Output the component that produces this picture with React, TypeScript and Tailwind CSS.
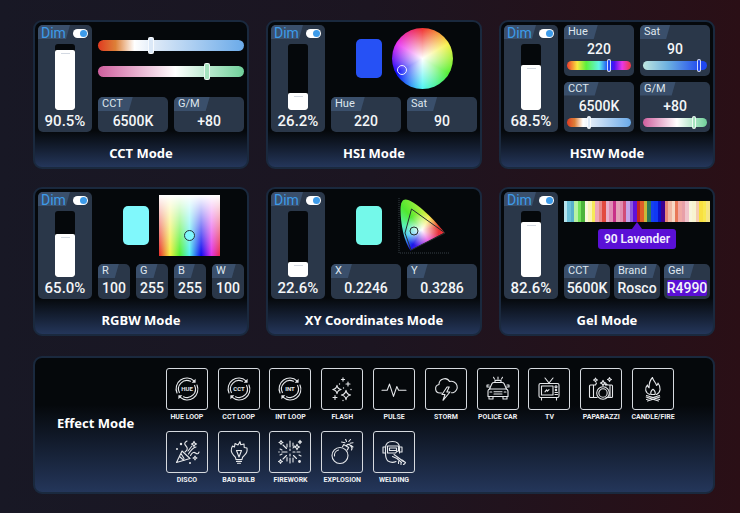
import React, { useId, useState } from "react";

const SANS = "font-['Roboto','Liberation_Sans',sans-serif]";

const CCT_TRACK =
  "[&::-webkit-slider-runnable-track]:bg-[linear-gradient(90deg,#e03a20_0%,#dd8038_12%,#ffffff_25%,#dbe8f7_40%,#6aaae9_100%)]";
const GM_TRACK =
  "[&::-webkit-slider-runnable-track]:bg-[linear-gradient(90deg,#cf5f9e_0%,#ffffff_53%,#6fd09a_100%)]";
const HUE_TRACK =
  "[&::-webkit-slider-runnable-track]:bg-[linear-gradient(90deg,#f03a2c_0%,#f8e840_16%,#5cf03c_30%,#60f4e8_50%,#1030f8_66%,#5010f0_74%,#e838e8_86%,#f03a3c_100%)]";
const SAT_TRACK =
  "[&::-webkit-slider-runnable-track]:bg-[linear-gradient(90deg,#bfe6e0_0%,#6aaee0_40%,#2048f0_90%,#2048f0_100%)]";

type SliderProps = { label: string; initial: number; track: string; small?: boolean; tint?: string };

function Slider({ label, initial, track, small, tint = "[&::-webkit-slider-thumb]:bg-[#dce9f8]" }: SliderProps) {
  const [value, setValue] = useState(initial);
  const size = small
    ? "h-[13px] [&::-webkit-slider-runnable-track]:h-[9px] [&::-webkit-slider-thumb]:-mt-0.5 [&::-webkit-slider-thumb]:h-[13px] [&::-webkit-slider-thumb]:w-1 [&::-webkit-slider-thumb]:border"
    : "h-[17px] [&::-webkit-slider-runnable-track]:h-[11px] [&::-webkit-slider-thumb]:-mt-[3px] [&::-webkit-slider-thumb]:h-[17px] [&::-webkit-slider-thumb]:w-[6px] [&::-webkit-slider-thumb]:border";
  return (
    <input
      type="range"
      aria-label={label}
      min={0}
      max={100}
      value={value}
      onChange={(e) => setValue(Number(e.target.value))}
      className={`block w-full appearance-none bg-transparent [&::-webkit-slider-runnable-track]:rounded-full [&::-webkit-slider-thumb]:appearance-none [&::-webkit-slider-thumb]:rounded-[2px] [&::-webkit-slider-thumb]:border-white/80 ${size} ${tint} ${track}`}
    />
  );
}

function Tab({ children }: { children: React.ReactNode }) {
  return (
    <span className="block h-3.5 self-start rounded-tl-[5px] bg-[#3a4f6b] pr-2.5 pl-1 text-[11px] leading-[14px] text-[#dfe6ee] [clip-path:polygon(0_0,100%_0,calc(100%-4px)_100%,0_100%)]">
      {children}
    </span>
  );
}

type TileProps = { label: string; value: string; highlight?: boolean; children?: React.ReactNode };

function Tile({ label, value, highlight, children }: TileProps) {
  return (
    <div className="flex min-w-0 flex-col rounded-[5px] bg-[#2a3749] pb-px">
      <Tab>{label}</Tab>
      <span className="flex h-5 items-center justify-center text-sm leading-4 font-medium text-[#f4f6f8]">
        <span className={highlight ? "rounded-[2px] bg-[#5a10d6]" : ""}>{value}</span>
      </span>
      {children && <div className="px-[3px]">{children}</div>}
    </div>
  );
}

function DimPanel({ level }: { level: number }) {
  const [value, setValue] = useState(level);
  const id = useId();
  return (
    <div className="flex w-[54px] shrink-0 flex-col rounded-[5px] bg-[#2a3749]">
      <div className="flex items-center justify-between pr-1">
        <label
          htmlFor={id}
          className="h-3.5 w-8 rounded-tl-[5px] bg-[#3a4f6b] pl-[3px] text-sm leading-[17px] text-[#3d9be9] [clip-path:polygon(0_0,100%_0,calc(100%-4px)_100%,0_100%)]"
        >
          Dim
        </label>
        <input
          id={id}
          type="checkbox"
          role="switch"
          defaultChecked
          className="mt-0.5 flex h-[9px] w-[15px] appearance-none items-center rounded-full bg-white px-px before:size-[7px] before:rounded-full before:bg-slate-400 before:content-[''] checked:justify-end checked:before:bg-[#3d9be9]"
        />
      </div>
      <div className="relative mx-auto mt-[5px] flex h-[66px] w-5 flex-col justify-end overflow-hidden rounded-[3px] bg-[#05080b]">
        <div className="flex justify-center rounded-[2px] bg-white pt-[3px]" style={{ height: `${value}%` }}>
          <span className="h-px w-[9px] bg-[#d3d9e2]" />
        </div>
        <input
          type="range"
          aria-label="Dim level"
          min={0}
          max={100}
          step={0.1}
          value={value}
          onChange={(e) => setValue(Number(e.target.value))}
          className="absolute inset-0 h-full w-full opacity-0 [direction:rtl] [writing-mode:vertical-lr]"
        />
      </div>
      <output className="block text-center text-[15px] leading-[22px] font-medium text-[#f4f6f8]">
        {value.toFixed(1)}%
      </output>
    </div>
  );
}

function ModeCard({ title, level, children }: { title: string; level: number; children: React.ReactNode }) {
  return (
    <section className="rounded-[9px] border-2 border-[#1a293e] bg-[linear-gradient(180deg,#05080b_0%,#05080b_75%,#24365a_100%)] px-[3px] pt-[3px]">
      <div className="flex gap-1.5">
        <DimPanel level={level} />
        <div className="flex min-w-0 flex-1 flex-col gap-1.5">{children}</div>
      </div>
      <h2 className="pt-[11px] pb-1 text-center font-['Noto_Sans','Liberation_Sans',sans-serif] text-[13px] leading-5 font-bold text-white">
        {title}
      </h2>
    </section>
  );
}

function Picker({ swatch, children }: { swatch: string; children: React.ReactNode }) {
  return (
    <div className="flex flex-1 items-center justify-center gap-2.5">
      <div className={`h-[39px] w-[26px] rounded-[5px] ${swatch}`} />
      <div className="relative size-[61px]">{children}</div>
    </div>
  );
}

const GEL_COLOURS = [
  "#b5e3ee", "#6cc0d8", "#58b0cc", "#b6f2a4", "#74e45c", "#4cb43a", "#f9f7dc", "#f8f4b4", "#f6ea58",
  "#eea6b8", "#e88888", "#e24a40", "#e8b0cc", "#e08cb4", "#c83088", "#e4a0b8", "#e08cb0", "#d04c78",
  "#c4a4ea", "#8c58dc", "#6010d8", "#c42420", "#e05c28", "#c8b838", "#2c7858", "#1440f0", "#1038f4",
  "#0a10c8", "#3c0090", "#e88878", "#f0b8a4", "#f6d8c4", "#e87858", "#f0a8a4", "#e8a0a8",
  "#f0c4cc", "#f8f6dc", "#f8f4d0", "#f4ccb0", "#f8e040", "#f8e850", "#f4e484",
];

const Star = ({ x, y, r }: { x: number; y: number; r: number }) => (
  <path d={`M${x} ${y - r}Q${x + r * 0.15} ${y - r * 0.15} ${x + r} ${y}Q${x + r * 0.15} ${y + r * 0.15} ${x} ${y + r}Q${x - r * 0.15} ${y + r * 0.15} ${x - r} ${y}Q${x - r * 0.15} ${y - r * 0.15} ${x} ${y - r}Z`} />
);

const Plus = ({ x, y, r = 1.6 }: { x: number; y: number; r?: number }) => (
  <path d={`M${x - r} ${y}h${r * 2}M${x} ${y - r}v${r * 2}`} />
);

const Dot = ({ x, y, r = 0.7 }: { x: number; y: number; r?: number }) => (
  <circle cx={x} cy={y} r={r} fill="currentColor" stroke="none" />
);

function Loop({ word }: { word: string }) {
  return (
    <>
      <path d="M-10 4A10.7 10.7 0 0 1 7 -8.2M-7.6 3.6A8.4 8.4 0 0 1 3.5 -7.7" />
      <path d="M10 -4A10.7 10.7 0 0 1 -7 8.2M7.6 -3.6A8.4 8.4 0 0 1 -3.5 7.7" />
      <path d="M8.6 -10.2v4h-4zM-8.6 10.2v-4h4z" fill="currentColor" stroke="none" />
      <text x="0" y="2.2" textAnchor="middle" fontSize="6" fontWeight="700" fill="currentColor" stroke="none">
        {word}
      </text>
    </>
  );
}

const EFFECTS: { name: string; art: React.ReactNode }[] = [
  { name: "HUE LOOP", art: <Loop word="HUE" /> },
  { name: "CCT LOOP", art: <Loop word="CCT" /> },
  { name: "INT LOOP", art: <Loop word="INT" /> },
  {
    name: "FLASH",
    art: (
      <>
        <Star x={-5} y={0.5} r={4.2} />
        <Star x={4} y={6} r={4.6} />
        <Plus x={1} y={-9.5} />
        <Plus x={6} y={-5} r={2} />
        <Plus x={-7} y={8.5} r={2} />
        <Dot x={9} y={0.5} />
        <Dot x={1} y={11.5} />
        <Dot x={-2.5} y={-5} />
        <Dot x={1.5} y={-1} />
      </>
    ),
  },
  { name: "PULSE", art: <path d="M-12 1.3h5.2l2.3-6.2L-.5 7.4 2.8-2.4 4.6 1.3H12" /> },
  {
    name: "STORM",
    art: (
      <>
        <path d="M-4.500 4h-1.700a4.300 4.300 0 0 1-.8-8.500A5.700 5.700 0 0 1 3.600-7.500a5.400 5.400 0 0 1 3.500 11.200H5.500" />
        <path d="M1-2-4 5.500h3l-2 5.800L4 3H.8L3.200-2z" />
      </>
    ),
  },
  {
    name: "POLICE CAR",
    art: (
      <>
        <path d="M-8.5 0-6-5.5Q-5.5-6.5-4-6.5h8q1.5 0 2 1L8.5 0M-7.5 0h15q2.5 0 2.5 2.5v5H-10v-5Q-10 0-7.5 0ZM-9 7.5V10h4V7.5M9 7.5V10H5V7.5" />
        <path d="M-3-6.5V-8.6h6v2.1M0-10v-2M-3.5-10l-1-1.7M3.5-10l1-1.7M-8.5-2H-11v-2h2M8.5-2H11v-2H9M-4 2.7h8M-4 5h8M-8 3h1.8M8 3H6.2" />
      </>
    ),
  },
  {
    name: "TV",
    art: (
      <>
        <rect x="-10" y="-5.5" width="20" height="14" rx="1.5" />
        <rect x="-7.5" y="-3" width="11.5" height="9" />
        <path d="M-4-11 0-6l4-5M-7.5 8.5V11M7.5 8.5V11M-4 2.8l1.6-2 .8 1.4L0 .6M6 3.5h2.5M6 5.5h2.5" />
        <circle cx="7" cy="-2.2" r="1" />
        <circle cx="7" cy="1" r=".7" />
      </>
    ),
  },
  {
    name: "PAPARAZZI",
    art: (
      <>
        <path d="M-4 8.5h-6.5Q-11.5 8.5-11.5 7.5V-3Q-11.5-4-10.5-4h5l1-2M5 8.5h5.5q1 0 1-1V-3q0-1-1-1H6.5M-7.5-4V8.5M9-4V8.5" />
        <circle cx="2" cy="4" r="6.3" />
        <circle cx="2" cy="4" r="4.2" />
        <Star x={-5.5} y={-9} r={2} />
        <Star x={8.5} y={-9.5} r={2} />
        <Star x={2} y={-6} r={2.6} />
        <Plus x={5} y={-4.5} r={1.2} />
      </>
    ),
  },
  {
    name: "CANDLE/FIRE",
    art: (
      <>
        <path d="M-3 5.5C-8 4-8.5-1-5.5-4q.3 2 1.600 2.800C-4-6-3-9-.5-11.500.2-8 3-6.500 3.500-3.500 4.800-4.200 5-5 5-6 8-2 8 3.500 3.500 5.500" />
        <path d="M-2 5.5Q-3 2.500 0 .3 3 2.500 2 5.500Z" />
        <path d="M-6.500 6.500 6.500 10.500M6.500 6.500-6.500 10.500M-6.800 8 0 10.300M6.800 8 0 10.300M-5.500 12 0 10.300 5.500 12" />
      </>
    ),
  },
  {
    name: "DISCO",
    art: (
      <>
        <path d="M-10.5 10.5-5 -1 3 6.5ZM-7.5 4.5l4.5 4M-6 1.5l3 5" />
        <path d="M-2 0Q2-3-1-6T0-11M1.5 2Q5-4 9-5M3.5 3.5Q6-1 8.5 1T12 0M1 -1 5-6" />
        <Star x={7} y={-8} r={2.6} />
        <Star x={8} y={6} r={2} />
        <Dot x={-10} y={-3} r={1} />
        <Dot x={-6} y={-8} r={1.2} />
        <Dot x={3} y={11} r={1} />
      </>
    ),
  },
  {
    name: "BAD BULB",
    art: (
      <>
        <path d="M-3 7.5Q-3 5-5.5 3.2A7.8 7.8 0 0 1-6.5-6l2 1 .5-3.5 3 1.5L1-10.4 1.8-7.2 5-8l.2 3.5L8-4A7.8 7.8 0 0 1 5.5 3.2Q3 5 3 7.5Z" />
        <path d="M-2.5-1.5 0 5 2.5-1.5H-2.5M-2.5 9.4h5M-1.5 11.3h3" />
      </>
    ),
  },
  {
    name: "FIREWORK",
    art: (
      <>
        <path d="M0-11v6M0-3v1.5M0 2v2M0 6v5M-3.5-3.5-7-7M-3 0h-5M-3.5 3.5-7 7M3.5 3.5 6.5 6.5M3 0h2M7 0h3M3-4l1.5-2M-3-8v3M3-9v3M-3 5.5V9M3 6v4M-10-3l2 1M-10 3l2-1M9 3l2 1" />
        <Star x={7} y={-5} r={2.6} />
        <Star x={-9} y={-9.5} r={2} />
        <Star x={10} y={-10} r={1.6} />
        <Star x={-9.5} y={9.5} r={2} />
        <Dot x={9.5} y={9.5} r={1.4} />
        <Dot x={-11} y={0} />
      </>
    ),
  },
  {
    name: "EXPLOSION",
    art: (
      <>
        <circle cx="-2" cy="3.5" r="8" />
        <path d="m.5-5.2 1.2-2.3 5 3-1.4 2.4M4.2-6Q6-9 8.5-6.5T9.5-2M-7.5 4A5.4 5.4 0 0 1-3.5-2" />
        <path d="M3-9.2-.5-10M4.5-10.5 3.5-13M6.800-10.500 8.500-12.500M8-8.800l3-.5M9-6.500l2 1.500" />
      </>
    ),
  },
  {
    name: "WELDING",
    art: (
      <>
        <path d="M2 9.500Q-2 11.500-6 9-8.500 7-8.500 1V-4Q-8.500-10.500-1.500-10.500T5.500-4V1" />
        <path d="M-8.500-5H-11v6h2.500M5.500-5H8v5H5.500" />
        <path d="M-6.500-6H4.500V-1Q2.500-1 1.500 1h-8ZM-4.500-4H2.500V-1.500H-4.500ZM0 2.500 9.500 9.500M-1.500 4.500 3 6.500l4.500 4" />
        <path d="m8 8 3.500 2.500-1 1.500M9.500 12.500l1.500-1M4.500 9.500v2M7 11v1.500" />
      </>
    ),
  },
];

export default function App() {
  return (
    <main
      className={`min-h-screen bg-[linear-gradient(90deg,#181825_0%,#1c1521_50%,#2a0f16_100%)] pt-5 pr-[25px] pb-[19px] pl-[33px] ${SANS}`}
    >
      <div className="grid grid-cols-3 gap-x-[17px] gap-y-[18px]">
        <ModeCard title="CCT Mode" level={90.5}>
          <div className="flex flex-1 flex-col justify-center gap-[9px]">
            <Slider label="Colour temperature" initial={36} track={CCT_TRACK} />
            <Slider label="Green / magenta" initial={76} track={GM_TRACK} tint="[&::-webkit-slider-thumb]:bg-[#a5e3bf]" />
          </div>
          <div className="grid grid-cols-2 gap-1.5">
            <Tile label="CCT" value="6500K" />
            <Tile label="G/M" value="+80" />
          </div>
        </ModeCard>

        <ModeCard title="HSI Mode" level={26.2}>
          <Picker swatch="bg-[#2651f5]">
            <div className="size-full rounded-full bg-[radial-gradient(circle,#ffffff_0%,transparent_70%),conic-gradient(#f03030,#f8f048,#50f030,#50f4f4,#0808f8,#e830f0,#f03030)]" />
            <span className="absolute top-[37px] left-[5px] size-2.5 rounded-full border border-white/90" />
          </Picker>
          <div className="grid grid-cols-2 gap-1.5">
            <Tile label="Hue" value="220" />
            <Tile label="Sat" value="90" />
          </div>
        </ModeCard>

        <ModeCard title="HSIW Mode" level={68.5}>
          <div className="grid flex-1 grid-cols-2 grid-rows-2 gap-1.5">
            <Tile label="Hue" value="220">
              <Slider small label="Hue" initial={66} track={HUE_TRACK} tint="[&::-webkit-slider-thumb]:bg-[#2048f0]" />
            </Tile>
            <Tile label="Sat" value="90">
              <Slider small label="Saturation" initial={90} track={SAT_TRACK} tint="[&::-webkit-slider-thumb]:bg-[#2048f0]" />
            </Tile>
            <Tile label="CCT" value="6500K">
              <Slider small label="Colour temperature" initial={33} track={CCT_TRACK} />
            </Tile>
            <Tile label="G/M" value="+80">
              <Slider small label="Green / magenta" initial={82} track={GM_TRACK} tint="[&::-webkit-slider-thumb]:bg-[#a5e3bf]" />
            </Tile>
          </div>
        </ModeCard>

        <ModeCard title="RGBW Mode" level={65}>
          <Picker swatch="bg-[#80f8fc]">
            <div className="size-full bg-[linear-gradient(180deg,#ffffff_0%,transparent_100%),linear-gradient(90deg,#e82828_0%,#f4f040_18%,#50f030_34%,#50f0f0_50%,#0808f0_69%,#e030e8_86%,#e82848_100%)]" />
            <span className="absolute top-[35px] left-[25px] size-[11px] rounded-full border border-[#26343c] bg-[#80f8fc]" />
          </Picker>
          <div className="grid grid-cols-4 gap-1.5">
            <Tile label="R" value="100" />
            <Tile label="G" value="255" />
            <Tile label="B" value="255" />
            <Tile label="W" value="100" />
          </div>
        </ModeCard>

        <ModeCard title="XY Coordinates Mode" level={22.6}>
          <Picker swatch="bg-[#74f9ea]">
            <div className="size-full bg-[radial-gradient(circle_at_30px_35px,#ffffff_0px,transparent_17px),conic-gradient(at_30px_35px,#b8f040_0deg,#f4e838_30deg,#e83028_80deg,#e83040_105deg,#e828d8_150deg,#1818e8_212deg,#48c8f0_250deg,#58f0b0_285deg,#50e830_320deg,#b8f040_360deg)] [clip-path:path('M9_15C9_8_11_5_14_5C22_5_40_22_53_38L19_56C13_48_9_30_9_15Z')]" />
            <svg viewBox="0 0 61 61" className="absolute inset-0 size-full" fill="none" aria-hidden="true">
              <path d="M7 3v55h50" stroke="#363e46" strokeDasharray="1 1" />
              <path d="M19.500 14 53 38 19 55 13 38Z" stroke="#26302e" />
              <circle cx="22" cy="36" r="4" stroke="#26302e" />
            </svg>
          </Picker>
          <div className="grid grid-cols-2 gap-1.5">
            <Tile label="X" value="0.2246" />
            <Tile label="Y" value="0.3286" />
          </div>
        </ModeCard>

        <ModeCard title="Gel Mode" level={82.6}>
          <div className="flex flex-1 flex-col items-center pt-[9px]">
            <div className="flex h-[21px] w-full">
              {GEL_COLOURS.map((colour, i) => (
                <span key={i} className="flex-1" style={{ backgroundColor: colour }} />
              ))}
            </div>
            <span className="h-[7px] w-2.5 bg-[#5a10d6] [clip-path:polygon(50%_0,100%_100%,0_100%)]" />
            <span className="rounded-[3px] bg-[#5a10d6] px-1.5 text-xs leading-5 font-semibold text-[#f4f0ff]">
              90 Lavender
            </span>
          </div>
          <div className="grid grid-cols-3 gap-1">
            <Tile label="CCT" value="5600K" />
            <Tile label="Brand" value="Rosco" />
            <Tile label="Gel" value="R4990" highlight />
          </div>
        </ModeCard>
      </div>

      <section className="mt-5 flex items-start rounded-[9px] border-2 border-[#1a293e] bg-[linear-gradient(180deg,#05080b_0%,#05080b_35%,#24365a_100%)] pt-2.5 pr-[34px] pb-[7px] pl-[22px]">
        <h2 className="w-[104px] shrink-0 pt-[45px] font-['Noto_Sans','Liberation_Sans',sans-serif] text-[13px] leading-5 font-bold text-white">
          Effect Mode
        </h2>
        <ul className="grid flex-1 grid-cols-10 gap-y-[9px]">
          {EFFECTS.map(({ name, art }) => (
            <li key={name} className="flex justify-center">
              <button type="button" className="flex flex-col items-center gap-0.5">
                <span className="flex size-[42px] items-center justify-center rounded-[3px] border border-[#d6dadf]">
                  <svg
                    viewBox="-13 -13 26 26"
                    className="size-[26px] text-[#e6e8eb]"
                    fill="none"
                    stroke="currentColor"
                    strokeWidth="1.1"
                    strokeLinecap="round"
                    strokeLinejoin="round"
                    aria-hidden="true"
                  >
                    {art}
                  </svg>
                </span>
                <span className="text-[7px] leading-2.5 font-bold whitespace-nowrap text-[#eef0f3]">{name}</span>
              </button>
            </li>
          ))}
        </ul>
      </section>
    </main>
  );
}
